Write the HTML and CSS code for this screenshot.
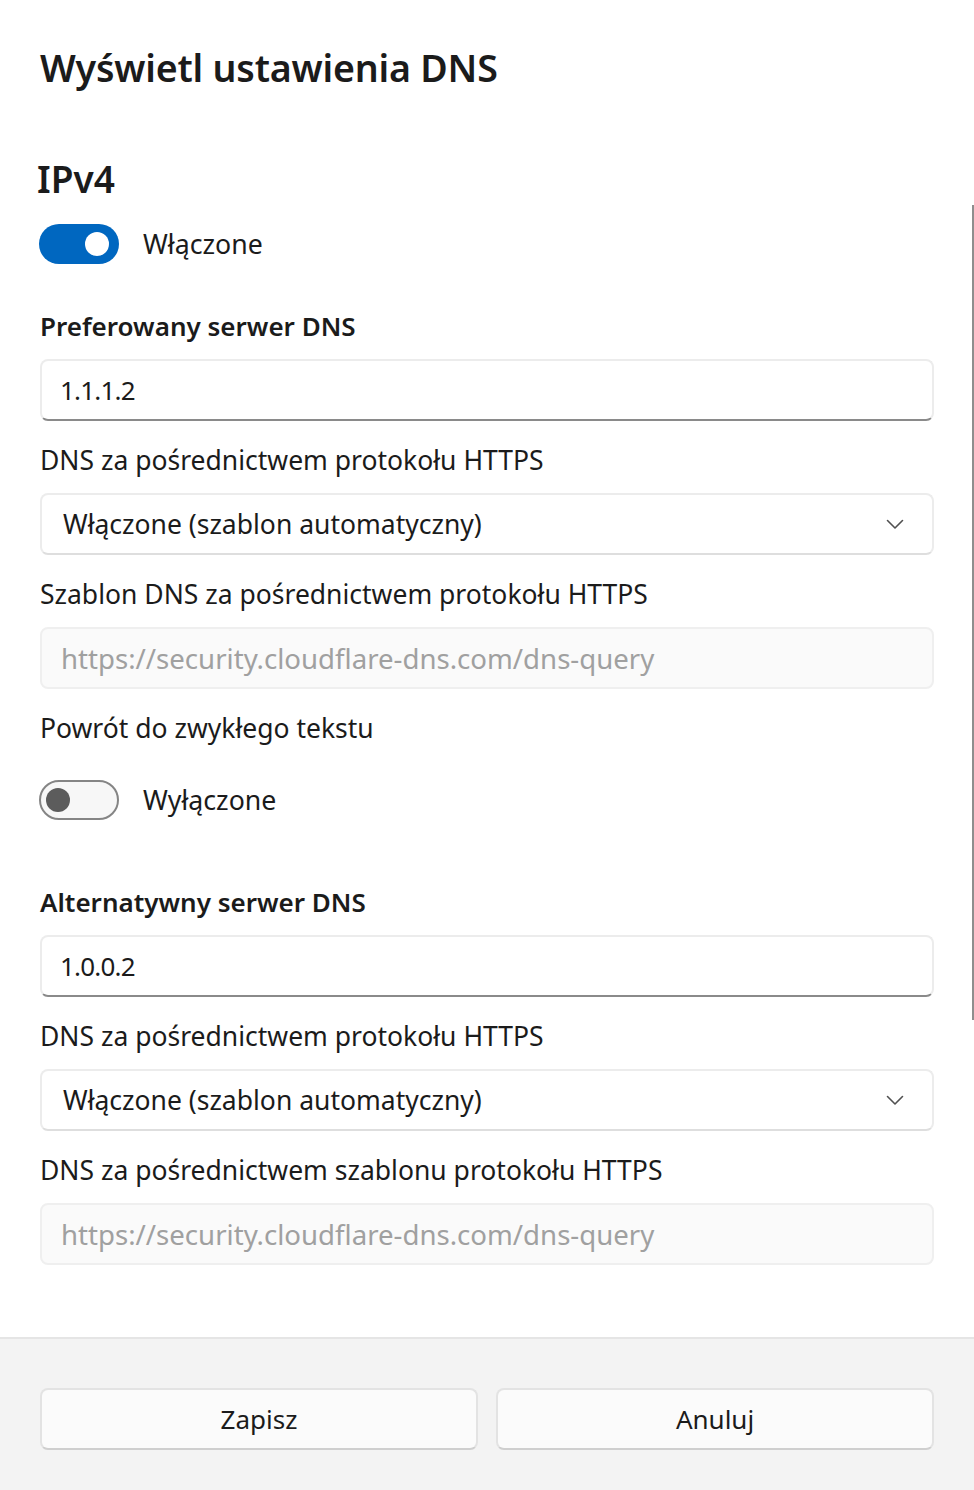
FILE: index.html
```html
<!DOCTYPE html>
<html lang="pl">
<head>
<meta charset="utf-8">
<title>Wyświetl ustawienia DNS</title>
<link rel="stylesheet" href="styles.css">
</head>
<body>
<div class="dialog">
  <div class="scrollbar"></div>
  <main class="content">
    <h1 class="title">Wyświetl ustawienia DNS</h1>
    <h2 class="section">IPv4</h2>
    <div class="toggle-row">
      <span class="toggle on"><span class="knob"></span></span>
      <span class="toggle-label">Włączone</span>
    </div>

    <div class="label strong first">Preferowany serwer DNS</div>
    <div class="field input"><span>1.1.1.2</span></div>
    <div class="label">DNS za pośrednictwem protokołu HTTPS</div>
    <div class="field select">
      <span>Włączone (szablon automatyczny)</span>
      <svg class="chev" width="18" height="11" viewBox="0 0 18 11"><path d="M1.5 1.5 L9 9 L16.5 1.5" fill="none" stroke="#505050" stroke-width="1.6" stroke-linecap="round" stroke-linejoin="round"/></svg>
    </div>
    <div class="label">Szablon DNS za pośrednictwem protokołu HTTPS</div>
    <div class="field disabled"><span>https://security.cloudflare-dns.com/dns-query</span></div>
    <div class="label">Powrót do zwykłego tekstu</div>
    <div class="toggle-row off-row">
      <span class="toggle off"><span class="knob"></span></span>
      <span class="toggle-label">Wyłączone</span>
    </div>

    <div class="label strong second">Alternatywny serwer DNS</div>
    <div class="field input"><span>1.0.0.2</span></div>
    <div class="label">DNS za pośrednictwem protokołu HTTPS</div>
    <div class="field select">
      <span>Włączone (szablon automatyczny)</span>
      <svg class="chev" width="18" height="11" viewBox="0 0 18 11"><path d="M1.5 1.5 L9 9 L16.5 1.5" fill="none" stroke="#505050" stroke-width="1.6" stroke-linecap="round" stroke-linejoin="round"/></svg>
    </div>
    <div class="label">DNS za pośrednictwem szablonu protokołu HTTPS</div>
    <div class="field disabled"><span>https://security.cloudflare-dns.com/dns-query</span></div>
  </main>
  <footer class="footer">
    <button class="btn">Zapisz</button>
    <button class="btn">Anuluj</button>
  </footer>
</div>
</body>
</html>
```
FILE: styles.css
```css
* { box-sizing: border-box; }
html, body { margin: 0; padding: 0; background: #ffffff; }
body {
  font-family: "Noto Sans", "Open Sans", "DejaVu Sans", sans-serif;
  color: #1b1b1b;
  width: 974px;
  height: 1490px;
  overflow: hidden;
}
.dialog { position: relative; width: 974px; height: 1490px; display: flex; flex-direction: column; }
.scrollbar {
  position: absolute;
  left: 972px;
  top: 205px;
  width: 1.5px;
  height: 815px;
  background: #8e8e8e;
}
.content { padding: 40px 40px 0 40px; display: flex; flex-direction: column; }
.title {
  margin: 0;
  font-size: 37.6px;
  font-weight: 600;
  line-height: 56px;
  height: 56px;
  letter-spacing: -0.2px;
}
.section {
  margin: 57px 0 0 -3px;
  font-size: 37px;
  font-weight: 600;
  line-height: 52px;
  height: 52px;
}
.toggle-row { display: flex; align-items: center; height: 40px; margin-top: 19px; }
.toggle-row.off-row { margin-top: 32px; }
.toggle {
  position: relative;
  width: 80px;
  height: 40px;
  border-radius: 20px;
  display: block;
  flex: none;
  margin-left: -1px;
}
.toggle.on { background: #0067c0; }
.toggle.off { background: #f7f7f7; border: 2px solid #858585; }
.knob { position: absolute; width: 24px; height: 24px; border-radius: 50%; top: 8px; }
.toggle.on .knob { background: #ffffff; left: 46px; }
.toggle.off .knob { background: #5c5c5c; left: 5px; top: 6px; }
.toggle-label { margin-left: 24px; font-size: 26.7px; line-height: 40px; }
.label {
  font-size: 26.5px;
  line-height: 40px;
  height: 40px;
  margin-top: 19px;
  white-space: nowrap;
}
.label.strong { font-weight: 600; font-size: 26px; }
.label.first { margin-top: 42px; }
.label.second { margin-top: 62px; }
.field {
  margin-top: 13px;
  height: 62px;
  border-radius: 8px;
  border: 2px solid #ececec;
  display: flex;
  align-items: center;
  font-size: 26.5px;
  white-space: nowrap;
}
.field.input { border-bottom: 2px solid #8a8a8a; padding-left: 18px; background: #ffffff; font-size: 26px; letter-spacing: -0.8px; }
.field.select { padding-left: 21px; padding-right: 28px; justify-content: space-between; border-bottom-color: #dedede; }
.field.disabled { background: #fafafa; border-color: #efefef; color: #a0a0a0; padding-left: 19px; font-size: 27.6px; }
.chev { display: block; }
.footer {
  margin-top: 72px;
  flex: 1;
  background: #f3f3f3;
  border-top: 2px solid #e5e5e5;
  padding: 49px 40px 0 40px;
  display: grid;
  grid-template-columns: 1fr 1fr;
  column-gap: 18px;
  align-content: start;
}
.btn {
  height: 62px;
  border-radius: 8px;
  border: 2px solid #e3e3e3;
  border-bottom-color: #cfcfcf;
  background: #fbfbfb;
  font-family: inherit;
  font-size: 26px;
  color: #1b1b1b;
  padding: 0;
}
```
